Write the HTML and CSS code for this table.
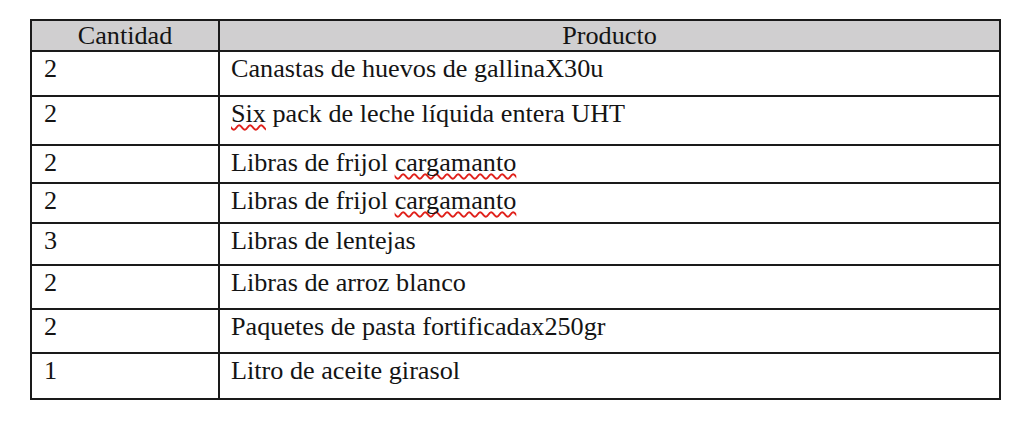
FILE: index.html
```html
<!DOCTYPE html>
<html lang="es">
<head>
<meta charset="utf-8">
<title>Lista</title>
<link rel="stylesheet" href="styles.css">
</head>
<body>
<div class="grid">
  <div class="cell head">Cantidad</div>
  <div class="cell head">Producto</div>

  <div class="cell qty r1">2</div>
  <div class="cell prod r1">Canastas de huevos de gallinaX30u</div>

  <div class="cell qty r2">2</div>
  <div class="cell prod r2"><span class="spell">Six</span> pack de leche líquida entera UHT</div>

  <div class="cell qty r3">2</div>
  <div class="cell prod r3">Libras de frijol <span class="spell">cargamanto</span></div>

  <div class="cell qty r4">2</div>
  <div class="cell prod r4">Libras de frijol <span class="spell">cargamanto</span></div>

  <div class="cell qty r5">3</div>
  <div class="cell prod r5">Libras de lentejas</div>

  <div class="cell qty r6">2</div>
  <div class="cell prod r6">Libras de arroz blanco</div>

  <div class="cell qty r7">2</div>
  <div class="cell prod r7">Paquetes de pasta fortificadax250gr</div>

  <div class="cell qty r8">1</div>
  <div class="cell prod r8">Litro de aceite girasol</div>
</div>
</body>
</html>
```

FILE: styles.css
```css
html, body {
  margin: 0;
  padding: 0;
  background: #ffffff;
}

body {
  font-family: "Liberation Serif", "Times New Roman", serif;
  font-size: 26.2px;
  color: #141414;
}

.grid {
  margin: 19px 0 0 30px;
  width: 971px;
  box-sizing: border-box;
  display: grid;
  grid-template-columns: 188px 781px;
  grid-template-rows: 31px 45px 49px 38px 40px 42px 44px 44px 46px;
  border-top: 2px solid #1a1a1a;
  border-left: 2px solid #1a1a1a;
}

.cell {
  border-right: 2px solid #1a1a1a;
  border-bottom: 2px solid #1a1a1a;
  line-height: 30px;
  white-space: nowrap;
  overflow: hidden;
}

.head {
  background: #d0cfd0;
  text-align: center;
  padding-top: 0;
}

.qty {
  padding: 2px 0 0 12px;
}

.prod {
  padding: 2px 0 0 11px;
}

.spell {
  text-decoration: underline wavy #e0201a;
  text-decoration-thickness: 1.5px;
  text-underline-offset: 2px;
  text-decoration-skip-ink: none;
}
```
